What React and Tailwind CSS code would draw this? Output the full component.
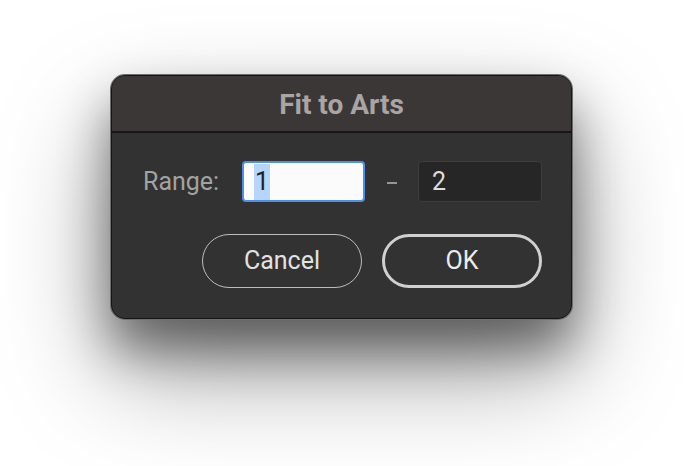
import React from 'react';

const font = { fontFamily: 'Roboto, "Noto Sans", sans-serif' };

const App = () => {
  return (
    <div className="w-[684px] h-[466px] bg-white pt-[75px] pl-[111px]" style={font}>
      <div className="w-[461px] h-[244px] rounded-[14px] border border-[#151515] shadow-[0_0_0_1px_#6e6e6e,0_30px_50px_rgba(0,0,0,0.45),0_50px_110px_rgba(0,0,0,0.4)] bg-[#323232] overflow-hidden flex flex-col">
        {/* title bar */}
        <div className="h-[57px] shrink-0 bg-[#3b3736] border-b-2 border-[#161616] flex items-center justify-center">
          <span className="text-[28px] font-bold text-[#a9a5a4] pt-[2px]">Fit to Arts</span>
        </div>

        <div className="flex-1 flex flex-col pt-[28px] pl-[31px] pr-[29px]">
          <div className="flex items-center h-[41px]">
            <span className="text-[25px] text-[#a3a3a3] w-[99px]">Range:</span>
            <div className="w-[123px] h-[41px] rounded-[4px] border-2 border-[#4f8fe8] bg-[#fbfbfb] flex items-center pl-[10px]">
              <span className="text-[25px] leading-[36px] text-[#222] bg-[#b5d5fb] px-[1px]">1</span>
            </div>
            <span className="w-[53px] flex justify-center pt-[2px]">
              <span className="block w-[10px] h-[2px] bg-[#959595]"></span>
            </span>
            <div className="w-[124px] h-[41px] rounded-[4px] border border-[#3d3d3d] bg-[#262626] flex items-center pl-[13px]">
              <span className="text-[25px] text-[#dcdcdc]">2</span>
            </div>
          </div>

          <div className="flex justify-end gap-[20px] mt-[32px]">
            <button className="w-[160px] h-[54px] rounded-full border-[1.5px] border-[#bdbdbd] text-[25px] text-[#e2e2e2]">
              Cancel
            </button>
            <button className="w-[160px] h-[54px] rounded-full border-[3px] border-[#d0d0d0] text-[25px] text-[#ececec]">
              OK
            </button>
          </div>
        </div>
      </div>
    </div>
  );
};

export default App;
